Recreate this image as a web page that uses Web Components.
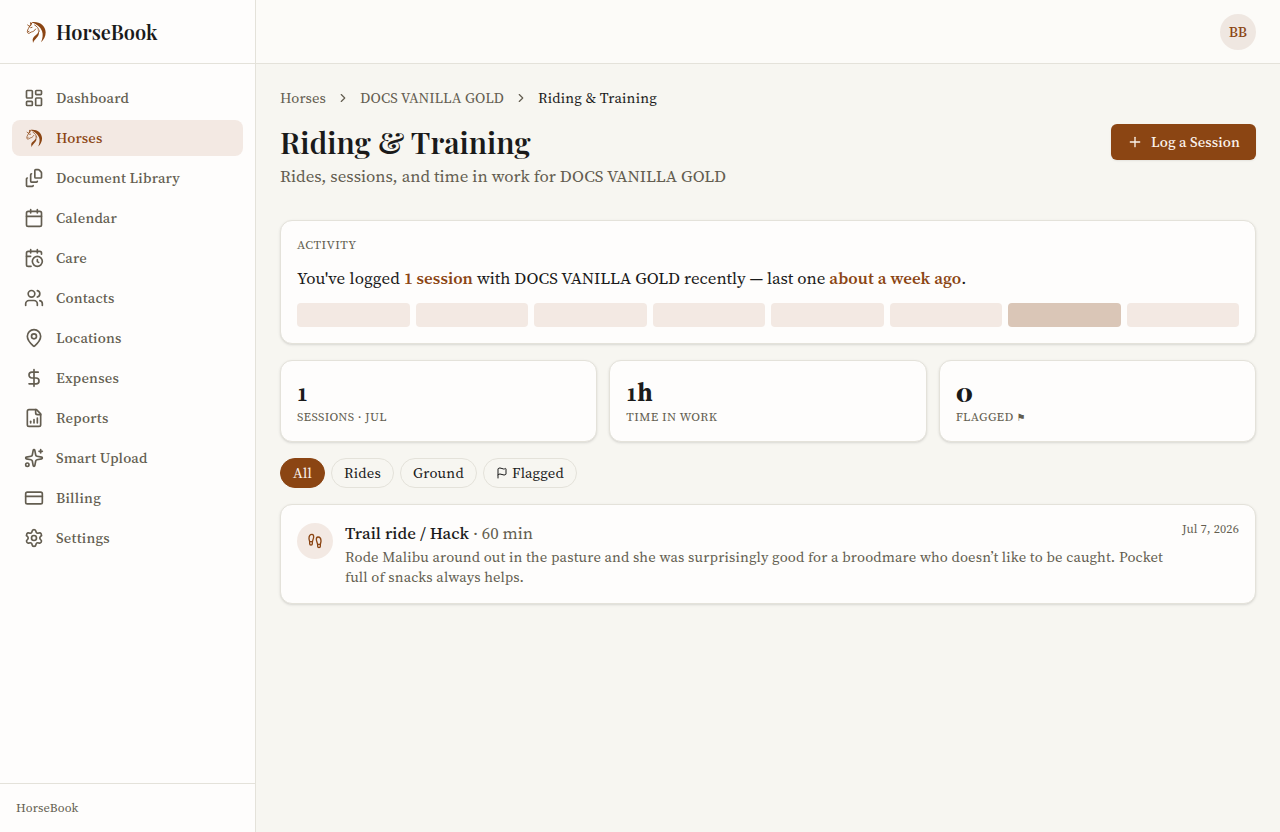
<!DOCTYPE html>
<html lang="en">
<head>
<meta charset="utf-8">
<title>HorseBook</title>
<style>
    :root {
        --bg: #f7f6f1;
        --surface: #fefdfc;
        --border: #e4e2da;
        --text: #1a1a1a;
        --muted: #635d50;
        --accent: #8b4513;
        --accent-soft: #f3e9e3;
        --serif: "Source Serif 4", "Liberation Serif", serif;
        --display: "Playfair Display", "Liberation Serif", serif;
    }
    * { box-sizing: border-box; }
    body {
        margin: 0;
        background: var(--bg);
        color: var(--text);
        font-family: var(--serif);
        font-size: 14.6px;
        line-height: 20px;
    }
    .stats {
        display: grid;
        grid-template-columns: repeat(3, 1fr);
        gap: 12px;
        margin: 16px 0;
    }
    .stats .glyph { font-family: "DejaVu Sans", sans-serif; font-size: 10px; }
    .chips {
        display: flex;
        gap: 6px;
        margin-bottom: 16px;
    }
</style>
</head>
<body>
<app-shell>
    <side-bar slot="sidebar"></side-bar>
    <top-bar slot="header" initials="BB"></top-bar>

    <bread-crumbs></bread-crumbs>
    <page-header></page-header>
    <activity-card></activity-card>

    <div class="stats">
        <stat-card value="1"><fit-text width="90">SESSIONS · JUL</fit-text></stat-card>
        <stat-card value="1h"><fit-text width="91">TIME IN WORK</fit-text></stat-card>
        <stat-card value="0"><fit-text width="58">FLAGGED</fit-text> <span class="glyph">⚑</span></stat-card>
    </div>

    <div class="chips">
        <filter-chip active><fit-text width="19">All</fit-text></filter-chip>
        <filter-chip><fit-text width="37">Rides</fit-text></filter-chip>
        <filter-chip><fit-text width="51">Ground</fit-text></filter-chip>
        <filter-chip icon="flag"><fit-text width="52">Flagged</fit-text></filter-chip>
    </div>

    <session-card></session-card>
</app-shell>

<script>
const ICONS = {
    dashboard: '<rect width="7" height="9" x="3" y="3" rx="1"/><rect width="7" height="5" x="14" y="3" rx="1"/><rect width="7" height="9" x="14" y="12" rx="1"/><rect width="7" height="5" x="3" y="16" rx="1"/>',
    documents: '<path d="M11 21a1 1 0 0 1-1 1H4a1 1 0 0 1-1-1v-8a1 1 0 0 1 1-1"/><path d="M16 16a1 1 0 0 1-1 1H9a1 1 0 0 1-1-1V8a1 1 0 0 1 1-1"/><path d="M21 6a2 2 0 0 0-.586-1.414l-2-2A2 2 0 0 0 17 2h-3a1 1 0 0 0-1 1v8a1 1 0 0 0 1 1h6a1 1 0 0 0 1-1z"/>',
    calendar: '<path d="M8 2v4"/><path d="M16 2v4"/><rect width="18" height="18" x="3" y="4" rx="2"/><path d="M3 10h18"/>',
    care: '<path d="M21 7.5V6a2 2 0 0 0-2-2H5a2 2 0 0 0-2 2v14a2 2 0 0 0 2 2h3.5"/><path d="M16 2v4"/><path d="M8 2v4"/><path d="M3 10h5"/><path d="M16 14v2.2l1.6 1"/><circle cx="16" cy="16" r="6"/>',
    users: '<path d="M16 21v-2a4 4 0 0 0-4-4H6a4 4 0 0 0-4 4v2"/><circle cx="9" cy="7" r="4"/><path d="M22 21v-2a4 4 0 0 0-3-3.87"/><path d="M16 3.13a4 4 0 0 1 0 7.75"/>',
    pin: '<path d="M20 10c0 4.993-5.539 10.193-7.399 11.799a1 1 0 0 1-1.202 0C9.539 20.193 4 14.993 4 10a8 8 0 0 1 16 0"/><circle cx="12" cy="10" r="3"/>',
    dollar: '<path d="M12 2v20"/><path d="M17 5H9.5a3.5 3.5 0 0 0 0 7h5a3.5 3.5 0 0 1 0 7H6"/>',
    report: '<path d="M15 2H6a2 2 0 0 0-2 2v16a2 2 0 0 0 2 2h12a2 2 0 0 0 2-2V7Z"/><path d="M14 2v4a2 2 0 0 0 2 2h4"/><path d="M8 18v-2"/><path d="M12 18v-4"/><path d="M16 18v-6"/>',
    sparkles: '<path d="M11.017 2.814a1 1 0 0 1 1.966 0l1.051 5.558a2 2 0 0 0 1.594 1.594l5.558 1.051a1 1 0 0 1 0 1.966l-5.558 1.051a2 2 0 0 0-1.594 1.594l-1.051 5.558a1 1 0 0 1-1.966 0l-1.051-5.558a2 2 0 0 0-1.594-1.594l-5.558-1.051a1 1 0 0 1 0-1.966l5.558-1.051a2 2 0 0 0 1.594-1.594z"/><path d="M20 2v4"/><path d="M22 4h-4"/><circle cx="4" cy="20" r="2"/>',
    card: '<rect width="20" height="14" x="2" y="5" rx="2"/><path d="M2 10h20"/>',
    settings: '<path d="M9.671 4.136a2.34 2.34 0 0 1 4.659 0 2.34 2.34 0 0 0 3.319 1.915 2.34 2.34 0 0 1 2.33 4.033 2.34 2.34 0 0 0 0 3.831 2.34 2.34 0 0 1-2.33 4.033 2.34 2.34 0 0 0-3.319 1.915 2.34 2.34 0 0 1-4.659 0 2.34 2.34 0 0 0-3.32-1.915 2.34 2.34 0 0 1-2.33-4.033 2.34 2.34 0 0 0 0-3.831A2.34 2.34 0 0 1 6.35 6.051a2.34 2.34 0 0 0 3.319-1.915"/><circle cx="12" cy="12" r="3"/>',
    chevron: '<path d="m9 18 6-6-6-6"/>',
    plus: '<path d="M5 12h14"/><path d="M12 5v14"/>',
    flag: '<path d="M4 22V4a1 1 0 0 1 .4-.8A6 6 0 0 1 8 2c3 0 5 2 7.333 2q2 0 3.067-.8A1 1 0 0 1 20 4v10a1 1 0 0 1-.4.8A6 6 0 0 1 16 16c-3 0-5-2-8-2a6 6 0 0 0-4 1.528"/>',
    footprints: '<path d="M4 16v-2.38C4 11.5 2.97 10.5 3 8c.03-2.72 1.49-6 4.5-6C9.37 2 10 3.8 10 5.5c0 3.11-2 5.66-2 8.68V16a2 2 0 1 1-4 0Z"/><path d="M20 20v-2.38c0-2.12 1.03-3.12 1-5.62-.03-2.72-1.49-6-4.5-6C14.63 6 14 7.8 14 9.5c0 3.11 2 5.66 2 8.68V20a2 2 0 1 0 4 0Z"/><path d="M16 17h4"/><path d="M4 13h4"/>'
};

// The brand mark is filled rather than stroked
const HORSE = `
    <g fill="currentColor" stroke="none">
        <path d="M14 2C36-2 56 10 57 32c0 13-6 23-14 30 5-12 7-23 3-34C41 16 30 7 14 2z"/>
        <path d="M31 21c4 6 5 10 1 15-5 6-13 9-14 17 0 5 1 8 1 11 3-8 7-11 11-16 8-8 10-17 1-27z"/>
        <path d="M18 1l-4 10-9 7 6-9-1-8 4 3z"/>
    </g>
    <g fill="none" stroke="currentColor" stroke-width="2.6" stroke-linecap="round" stroke-linejoin="round">
        <path d="M10 12C8 18 2 23 2 30c0 3 2 6 5 5l7-4c6-1 10-4 13-9"/>
        <path d="M24 10c7 4 12 10 14 19"/>
        <path d="M5 30l2-1M12 18l4-1"/>
        <path d="M3 10l4 3"/>
    </g>`;

class AppIcon extends HTMLElement {
    connectedCallback() {
        const name = this.getAttribute('name');
        const size = this.getAttribute('size') || 20;
        const horse = name === 'horse';
        this.attachShadow({ mode: 'open' }).innerHTML = `
            <style>
                :host { display: inline-flex; flex: none; }
                svg { display: block; }
            </style>
            <svg width="${size}" height="${size}" viewBox="${horse ? '-8 -5 72 72' : '0 0 24 24'}" fill="none"
                stroke="currentColor" stroke-width="2" stroke-linecap="round" stroke-linejoin="round">
                ${horse ? HORSE : ICONS[name]}
            </svg>
        `;
    }
}

// Spreads its letters so the line takes exactly the given width
class FitText extends HTMLElement {
    connectedCallback() {
        this.attachShadow({ mode: 'open' }).innerHTML =
            '<style>:host { display: inline; white-space: nowrap; }</style><slot></slot>';
        const target = parseFloat(this.getAttribute('width'));
        const natural = this.getBoundingClientRect().width;
        this.style.letterSpacing = `${(target - natural) / this.textContent.length}px`;
    }
}

class AppShell extends HTMLElement {
    connectedCallback() {
        this.attachShadow({ mode: 'open' }).innerHTML = `
            <style>
                :host { display: flex; height: 832px; }
                .content { flex: 1; display: flex; flex-direction: column; min-width: 0; }
                main { padding: 24px; }
            </style>
            <slot name="sidebar"></slot>
            <div class="content">
                <slot name="header"></slot>
                <main><slot></slot></main>
            </div>
        `;
    }
}

class NavItem extends HTMLElement {
    connectedCallback() {
        this.attachShadow({ mode: 'open' }).innerHTML = `
            <style>
                :host {
                    display: flex;
                    align-items: center;
                    gap: 12px;
                    height: 36px;
                    padding: 0 12px;
                    border-radius: 8px;
                    color: var(--muted);
                    font-weight: 500;
                }
                :host([active]) { background: var(--accent-soft); color: var(--accent); }
            </style>
            <app-icon name="${this.getAttribute('icon')}"></app-icon>
            <slot></slot>
        `;
    }
}

class SideBar extends HTMLElement {
    connectedCallback() {
        const items = [
            ['dashboard', 'Dashboard', 73],
            ['horse', 'Horses', 46.5],
            ['documents', 'Document Library', 124],
            ['calendar', 'Calendar', 61],
            ['care', 'Care', 31],
            ['users', 'Contacts', 58.5],
            ['pin', 'Locations', 65.5],
            ['dollar', 'Expenses', 63],
            ['report', 'Reports', 52.5],
            ['sparkles', 'Smart Upload', 91.5],
            ['card', 'Billing', 45],
            ['settings', 'Settings', 54]
        ];
        this.attachShadow({ mode: 'open' }).innerHTML = `
            <style>
                :host {
                    display: flex;
                    flex-direction: column;
                    flex: none;
                    box-sizing: border-box;
                    width: 256px;
                    background: var(--surface);
                    border-right: 1px solid var(--border);
                }
                .brand {
                    box-sizing: border-box;
                    height: 64px;
                    padding: 0 24px;
                    display: flex;
                    align-items: center;
                    gap: 8px;
                    border-bottom: 1px solid var(--border);
                    font-family: var(--display);
                    font-size: 20px;
                    font-weight: 600;
                    line-height: 28px;
                }
                .brand app-icon { color: var(--accent); }
                nav {
                    flex: 1;
                    display: flex;
                    flex-direction: column;
                    gap: 4px;
                    padding: 16px 12px;
                }
                footer {
                    padding: 16px;
                    border-top: 1px solid var(--border);
                    color: var(--muted);
                    font-size: 12.4px;
                    line-height: 16px;
                }
            </style>
            <div class="brand">
                <app-icon name="horse" size="24"></app-icon>
                <span>HorseBook</span>
            </div>
            <nav>
                ${items.map(([icon, label, w]) => `
                    <nav-item icon="${icon}" ${label === 'Horses' ? 'active' : ''}><fit-text width="${w}">${label}</fit-text></nav-item>
                `).join('')}
            </nav>
            <footer><fit-text width="62.5">HorseBook</fit-text></footer>
        `;
    }
}

class TopBar extends HTMLElement {
    connectedCallback() {
        this.attachShadow({ mode: 'open' }).innerHTML = `
            <style>
                :host {
                    display: flex;
                    align-items: center;
                    justify-content: flex-end;
                    box-sizing: border-box;
                    height: 64px;
                    padding: 0 24px;
                    background: #fcfbf8;
                    border-bottom: 1px solid var(--border);
                }
                .avatar {
                    display: grid;
                    place-items: center;
                    width: 36px;
                    height: 36px;
                    border-radius: 50%;
                    background: #efe7e1;
                    color: var(--accent);
                    font-weight: 500;
                }
            </style>
            <div class="avatar"><fit-text width="18.5">${this.getAttribute('initials')}</fit-text></div>
        `;
    }
}

class BreadCrumbs extends HTMLElement {
    connectedCallback() {
        this.attachShadow({ mode: 'open' }).innerHTML = `
            <style>
                :host {
                    display: flex;
                    align-items: center;
                    gap: 10px;
                    height: 20px;
                    margin-bottom: 16px;
                    color: var(--muted);
                }
                .current { color: var(--text); }
            </style>
            <fit-text width="46">Horses</fit-text>
            <app-icon name="chevron" size="14"></app-icon>
            <fit-text width="144">DOCS VANILLA GOLD</fit-text>
            <app-icon name="chevron" size="14"></app-icon>
            <fit-text class="current" width="119">Riding &amp; Training</fit-text>
        `;
    }
}

class PageHeader extends HTMLElement {
    connectedCallback() {
        this.attachShadow({ mode: 'open' }).innerHTML = `
            <style>
                :host {
                    display: flex;
                    justify-content: space-between;
                    align-items: flex-start;
                    margin-bottom: 32px;
                }
                h1 {
                    margin: 0 0 4px;
                    font-family: var(--display);
                    font-size: 30px;
                    font-weight: 600;
                    line-height: 36px;
                }
                p {
                    margin: 0;
                    color: var(--muted);
                    font-size: 16.9px;
                    line-height: 24px;
                }
                button {
                    display: flex;
                    align-items: center;
                    gap: 8px;
                    height: 36px;
                    padding: 0 16px;
                    border: none;
                    border-radius: 6px;
                    background: var(--accent);
                    color: #fbf3ec;
                    font: inherit;
                    font-weight: 500;
                    box-shadow: 0 1px 2px rgba(0,0,0,0.08);
                }
            </style>
            <div>
                <h1>Riding &amp; Training</h1>
                <p><fit-text width="446">Rides, sessions, and time in work for DOCS VANILLA GOLD</fit-text></p>
            </div>
            <button><app-icon name="plus" size="16"></app-icon><fit-text width="89">Log a Session</fit-text></button>
        `;
    }
}

class SurfaceCard extends HTMLElement {
    connectedCallback() {
        this.attachShadow({ mode: 'open' }).innerHTML = `
            <style>
                :host {
                    display: block;
                    box-sizing: border-box;
                    padding: 16px;
                    background: var(--surface);
                    border: 1px solid var(--border);
                    border-radius: 12px;
                    box-shadow: 0 1px 3px rgba(0,0,0,0.1), 0 1px 2px -1px rgba(0,0,0,0.1);
                }
            </style>
            <slot></slot>
        `;
    }
}

class ActivityCard extends HTMLElement {
    connectedCallback() {
        const weeks = [0, 0, 0, 0, 0, 0, 1, 0];
        this.attachShadow({ mode: 'open' }).innerHTML = `
            <style>
                :host { display: block; }
                .label {
                    margin-bottom: 12px;
                    color: var(--muted);
                    font-size: 12.4px;
                    line-height: 16px;
                }
                .summary {
                    margin-bottom: 12px;
                    font-size: 16.9px;
                    line-height: 26px;
                    white-space: nowrap;
                }
                b { color: var(--accent); font-weight: 600; }
                .weeks { display: grid; grid-template-columns: repeat(8, 1fr); gap: 6px; }
                .weeks i { height: 24px; border-radius: 4px; background: var(--accent-soft); }
                .weeks i.on { background: #dac6b7; }
            </style>
            <surface-card>
                <div class="label"><fit-text width="59.5">ACTIVITY</fit-text></div>
                <div class="summary"><fit-text width="103">You've logged</fit-text> <b><fit-text width="69">1 session</fit-text></b> <fit-text width="348.5">with DOCS VANILLA GOLD recently — last one</fit-text> <b><fit-text width="132">about a week ago</fit-text></b>.</div>
                <div class="weeks">${weeks.map(n => `<i class="${n ? 'on' : ''}"></i>`).join('')}</div>
            </surface-card>
        `;
    }
}

class StatCard extends HTMLElement {
    connectedCallback() {
        const value = this.getAttribute('value');
        const zero = value === '0';
        this.attachShadow({ mode: 'open' }).innerHTML = `
            <style>
                :host { display: block; }
                .value {
                    height: 32px;
                    font-size: 25px;
                    font-weight: 700;
                    line-height: 30px;
                }
                .digit { font-size: 20px; line-height: 0; }
                .value.zero {
                    font-family: var(--display);
                    font-size: 25.5px;
                    font-weight: 900;
                    line-height: 28px;
                }
                .zero .digit { font-size: inherit; }
                .label {
                    height: 16px;
                    color: var(--muted);
                    font-size: 12.4px;
                    line-height: 16px;
                }
            </style>
            <surface-card>
                <div class="value ${zero ? 'zero' : ''}"><span class="digit">${value[0]}</span>${value.slice(1)}</div>
                <div class="label"><slot></slot></div>
            </surface-card>
        `;
    }
}

class FilterChip extends HTMLElement {
    connectedCallback() {
        const icon = this.getAttribute('icon');
        this.attachShadow({ mode: 'open' }).innerHTML = `
            <style>
                :host {
                    display: flex;
                    align-items: center;
                    gap: 4px;
                    box-sizing: border-box;
                    height: 30px;
                    padding: 0 12px;
                    border: 1px solid var(--border);
                    border-radius: 15px;
                }
                :host([active]) {
                    background: var(--accent);
                    border-color: var(--accent);
                    color: #fbf3ec;
                }
            </style>
            ${icon ? `<app-icon name="${icon}" size="12"></app-icon>` : ''}
            <slot></slot>
        `;
    }
}

class SessionCard extends HTMLElement {
    connectedCallback() {
        this.attachShadow({ mode: 'open' }).innerHTML = `
            <style>
                :host { display: block; }
                .row { display: flex; align-items: flex-start; gap: 12px; }
                .badge {
                    flex: none;
                    display: grid;
                    place-items: center;
                    width: 36px;
                    height: 36px;
                    margin-top: 2px;
                    border-radius: 50%;
                    background: var(--accent-soft);
                    color: var(--accent);
                }
                .body { flex: 1; min-width: 0; }
                .title { margin-bottom: 2px; font-size: 16.9px; line-height: 24px; font-weight: 500; }
                .title .meta { font-weight: 400; }
                .meta, .notes, .date { color: var(--muted); }
                .date { font-size: 12.4px; line-height: 16px; }
            </style>
            <surface-card>
                <div class="row">
                    <div class="badge"><app-icon name="footprints" size="16"></app-icon></div>
                    <div class="body">
                        <div class="title"><fit-text width="124">Trail ride / Hack</fit-text> <fit-text class="meta" width="60">· 60 min</fit-text></div>
                        <div class="notes">
                            <fit-text width="818">Rode Malibu around out in the pasture and she was surprisingly good for a broodmare who doesn’t like to be caught. Pocket</fit-text><br>
                            <fit-text width="179">full of snacks always helps.</fit-text>
                        </div>
                    </div>
                    <div class="date"><fit-text width="57">Jul 7, 2026</fit-text></div>
                </div>
            </surface-card>
        `;
    }
}

customElements.define('app-shell', AppShell);
customElements.define('side-bar', SideBar);
customElements.define('nav-item', NavItem);
customElements.define('top-bar', TopBar);
customElements.define('bread-crumbs', BreadCrumbs);
customElements.define('page-header', PageHeader);
customElements.define('surface-card', SurfaceCard);
customElements.define('activity-card', ActivityCard);
customElements.define('stat-card', StatCard);
customElements.define('filter-chip', FilterChip);
customElements.define('session-card', SessionCard);
customElements.define('app-icon', AppIcon);
// Last, so every inherited font is in place before widths are measured
customElements.define('fit-text', FitText);
</script>
</body>
</html>
